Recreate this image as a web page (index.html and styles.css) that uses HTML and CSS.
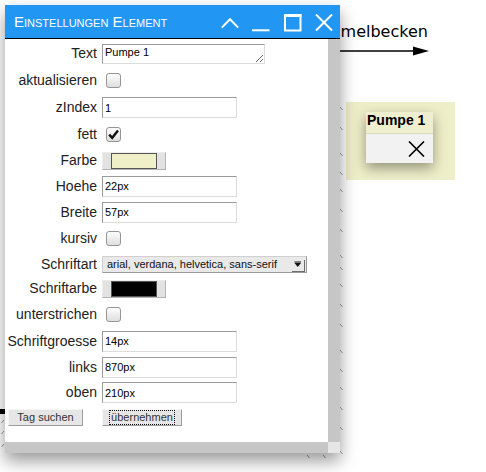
FILE: index.html
```html
<!DOCTYPE html>
<html lang="de">
<head>
<meta charset="utf-8">
<title>Einstellungen Element</title>
<link rel="stylesheet" href="styles.css">
</head>
<body>
<div class="canvas">
  <svg class="marks" width="486" height="472" viewBox="0 0 486 472">
    <g stroke="#9a9a9a" stroke-width="1">
      <line x1="340" y1="107" x2="342.5" y2="110"/>
      <line x1="340" y1="127" x2="342.5" y2="130"/>
      <line x1="340" y1="153" x2="342.5" y2="156"/>
      <line x1="340" y1="172" x2="342.5" y2="175"/>
      <line x1="340" y1="189" x2="342.5" y2="192"/>
      <line x1="340" y1="209" x2="342.5" y2="212"/>
      <line x1="340" y1="229" x2="342.5" y2="232"/>
      <line x1="340" y1="255" x2="342.5" y2="258"/>
      <line x1="340" y1="267" x2="342.5" y2="270"/>
      <line x1="340" y1="284" x2="342.5" y2="287"/>
      <line x1="340" y1="304" x2="342.5" y2="307"/>
      <line x1="340" y1="324" x2="342.5" y2="327"/>
      <line x1="340" y1="350" x2="342.5" y2="353"/>
      <line x1="340" y1="369" x2="342.5" y2="372"/>
      <line x1="340" y1="387" x2="342.5" y2="390"/>
      <line x1="340" y1="407" x2="342.5" y2="410"/>
      <line x1="340" y1="427" x2="342.5" y2="430"/>
      <line x1="340" y1="451" x2="342.5" y2="454"/>
      <line x1="307" y1="455" x2="309.5" y2="458"/>
      <line x1="323" y1="455" x2="325.5" y2="458"/>
      <line x1="4" y1="420" x2="1.5" y2="423"/>
      <line x1="4" y1="431" x2="1.5" y2="434"/>
      <line x1="4" y1="444" x2="1.5" y2="447"/>
    </g>
    <rect x="0" y="409" width="5" height="5" fill="#000"/>
  </svg>

  <div class="diagram-label">Sammelbecken</div>
  <svg class="arrow" width="130" height="14" viewBox="0 0 130 14">
    <line x1="0" y1="7" x2="116" y2="7" stroke="#000" stroke-width="1.6"/>
    <polygon points="108,2.5 124,7 108,11.5" fill="#000"/>
  </svg>

  <div class="node">
    <div class="popup">
      <div class="popup-head">Pumpe 1</div>
      <div class="popup-body">
        <svg class="popup-close" width="17" height="16" viewBox="0 0 17 16">
          <path d="M1 0.5 L16 15.5 M16 0.5 L1 15.5" stroke="#000" stroke-width="1.6" fill="none"/>
        </svg>
      </div>
    </div>
  </div>

  <div class="dialog">
    <div class="titlebar">
      <span class="title">Einstellungen Element</span>
      <svg class="ticon" width="18" height="18" viewBox="0 0 18 18">
        <polyline points="0.8,13.6 9,5.2 17.2,13.6" fill="none" stroke="#fff" stroke-width="2"/>
      </svg>
      <svg class="ticon" width="18" height="18" viewBox="0 0 18 18">
        <line x1="0" y1="16.3" x2="17.5" y2="16.3" stroke="#fff" stroke-width="2"/>
      </svg>
      <svg class="ticon sq" width="18" height="18" viewBox="0 0 18 18">
        <rect x="1" y="1" width="15.5" height="15.5" fill="none" stroke="#fff" stroke-width="2"/>
        <rect x="0" y="0" width="17.5" height="3" fill="#fff"/>
      </svg>
      <svg class="ticon" width="18" height="18" viewBox="0 0 18 18">
        <path d="M1 0.5 L17 16.5 M17 0.5 L1 16.5" stroke="#fff" stroke-width="2" fill="none"/>
      </svg>
    </div>
    <div class="main">
      <div class="content">
        <div class="row h27">
          <label class="lbl">Text</label>
          <textarea class="ta">Pumpe 1</textarea>
        </div>
        <div class="row h27">
          <label class="lbl">aktualisieren</label>
          <span class="cb"></span>
        </div>
        <div class="row h27">
          <label class="lbl">zIndex</label>
          <input class="tf" type="text" value="1">
        </div>
        <div class="row h27">
          <label class="lbl">fett</label>
          <span class="cb">
            <svg width="13" height="13" viewBox="0 0 13 13"><path d="M2.2 6.6 L5.2 9.8 L11 2.6" fill="none" stroke="#111" stroke-width="2.4"/></svg>
          </span>
        </div>
        <div class="row h25">
          <label class="lbl">Farbe</label>
          <span class="color"><span class="swatch light"></span></span>
        </div>
        <div class="row h26">
          <label class="lbl">Hoehe</label>
          <input class="tf" type="text" value="22px">
        </div>
        <div class="row h26">
          <label class="lbl">Breite</label>
          <input class="tf" type="text" value="57px">
        </div>
        <div class="row h27">
          <label class="lbl">kursiv</label>
          <span class="cb"></span>
        </div>
        <div class="row h24">
          <label class="lbl">Schriftart</label>
          <span class="sel">arial, verdana, helvetica, sans-serif
            <svg class="sel-arrow" width="14" height="17" viewBox="0 0 14 17">
              <polygon points="2.5,7 9,7 5.75,11" fill="#111"/>
              <rect x="2.5" y="5.5" width="6.5" height="1" fill="#111"/>
              <line x1="12.5" y1="4" x2="12.5" y2="16" stroke="#6e6e6e" stroke-width="1"/>
              <line x1="0" y1="15.5" x2="13" y2="15.5" stroke="#6e6e6e" stroke-width="1"/>
            </svg>
          </span>
        </div>
        <div class="row h25">
          <label class="lbl">Schriftarbe</label>
          <span class="color"><span class="swatch dark"></span></span>
        </div>
        <div class="row h27">
          <label class="lbl">unterstrichen</label>
          <span class="cb"></span>
        </div>
        <div class="row h26">
          <label class="lbl">Schriftgroesse</label>
          <input class="tf" type="text" value="14px">
        </div>
        <div class="row h26">
          <label class="lbl">links</label>
          <input class="tf" type="text" value="870px">
        </div>
        <div class="row h25">
          <label class="lbl">oben</label>
          <input class="tf" type="text" value="210px">
        </div>
        <div class="row h24 buttons">
          <button class="btn btn-search" type="button">Tag suchen</button>
          <button class="btn btn-apply" type="button"><span class="focus">übernehmen</span></button>
        </div>
      </div>
      <div class="vscroll"></div>
    </div>
    <div class="hscroll">
      <div class="hbar"></div>
      <div class="corner"></div>
    </div>
  </div>
</div>
</body>
</html>
```

FILE: styles.css
```css
html, body {
  margin: 0;
  padding: 0;
  background: #fff;
}

body {
  font-family: "Liberation Sans", Arial, sans-serif;
  color: #222;
  overflow: hidden;
}

.canvas {
  position: relative;
  width: 486px;
  height: 472px;
  overflow: hidden;
}

.marks {
  position: absolute;
  left: 0;
  top: 0;
}

.diagram-label {
  position: absolute;
  left: 305px;
  top: 22px;
  font-family: "DejaVu Sans", sans-serif;
  font-size: 16px;
  line-height: 20px;
  color: #000;
  white-space: nowrap;
}

.arrow {
  position: absolute;
  left: 305px;
  top: 44px;
}

.node {
  position: absolute;
  left: 346px;
  top: 102px;
  width: 109px;
  height: 78px;
  background: #eeeec8;
}

.popup {
  position: absolute;
  left: 20px;
  top: 10px;
  width: 67px;
  box-shadow: 0 5px 12px rgba(0, 0, 0, 0.38);
}

.popup-head {
  height: 22px;
  box-sizing: border-box;
  padding: 0 0 0 1px;
  background: #efefcf;
  border-bottom: 1px solid #dadac0;
  font-weight: bold;
  font-size: 14px;
  line-height: 17px;
  color: #000;
  white-space: nowrap;
}

.popup-body {
  height: 29px;
  background: #f2f2f2;
  display: flex;
  justify-content: flex-end;
  align-items: flex-start;
}

.popup-close {
  margin: 7px 8px 0 0;
}

.dialog {
  position: absolute;
  left: 5px;
  top: 5px;
  width: 335px;
  height: 448px;
  display: flex;
  flex-direction: column;
  background: #fff;
  box-shadow: 0 8px 16px rgba(0, 0, 0, 0.4);
}

.titlebar {
  height: 33px;
  flex: none;
  background: #2196f3;
  border-bottom: 1px solid #000;
  display: flex;
  align-items: flex-start;
  padding: 0 7px 0 9px;
  color: #fff;
}

.title {
  flex: 1;
  font-size: 15px;
  font-variant: small-caps;
  line-height: 18px;
  margin-top: 8px;
  white-space: nowrap;
}

.ticon {
  flex: none;
  margin-top: 9px;
  margin-left: 13px;
}

.ticon.sq {
  margin-left: 14px;
}

.main {
  flex: 1;
  display: flex;
  min-height: 0;
}

.content {
  flex: 1;
  padding-top: 1px;
  display: flex;
  flex-direction: column;
}

.vscroll {
  width: 12px;
  flex: none;
  background: #c6c6c6;
}

.hscroll {
  height: 11px;
  flex: none;
  display: flex;
}

.hbar {
  flex: 1;
  background: #c6c6c6;
}

.corner {
  width: 12px;
  background: #e6e6e6;
}

.row {
  display: flex;
  align-items: center;
  flex: none;
}

.h24 { height: 24px; }
.h25 { height: 25px; }
.h26 { height: 26px; }
.h27 { height: 27px; }

.lbl {
  width: 92px;
  margin-right: 5px;
  text-align: right;
  font-size: 14px;
  line-height: 17px;
  white-space: nowrap;
  color: #222;
}

.tf {
  width: 135px;
  height: 21px;
  box-sizing: border-box;
  margin: 0;
  border: 1px solid;
  border-color: #9a9a9a #dcdcdc #dcdcdc #9a9a9a;
  padding: 0 2px;
  font-family: "Liberation Sans", Arial, sans-serif;
  font-size: 11px;
  color: #000;
  background: #fff;
  outline: none;
}

.ta {
  width: 163px;
  height: 20px;
  box-sizing: border-box;
  margin: 0;
  border: 1px solid;
  border-color: #9a9a9a #dcdcdc #dcdcdc #9a9a9a;
  padding: 1px 2px;
  font-family: "Liberation Sans", Arial, sans-serif;
  font-size: 11px;
  line-height: 13px;
  color: #000;
  background: #fff;
  outline: none;
  overflow: hidden;
}

.cb {
  width: 15px;
  height: 15px;
  box-sizing: border-box;
  margin-left: 4px;
  border: 1px solid #959595;
  border-radius: 3px;
  background: linear-gradient(#fdfdfd, #dedede);
  display: flex;
  align-items: center;
  justify-content: center;
}

.color {
  width: 64px;
  height: 18px;
  box-sizing: border-box;
  padding: 0 8px;
  border: 1px solid;
  border-color: #ececec #b4b4b4 #b4b4b4 #ececec;
  background: #e2e2e2;
  display: flex;
  align-items: center;
}

.swatch {
  flex: 1;
  height: 16px;
  box-sizing: border-box;
  border: 1px solid #555;
}

.swatch.light { background: #f0f0c8; }
.swatch.dark { background: #000; }

.sel {
  position: relative;
  width: 205px;
  height: 17px;
  box-sizing: border-box;
  padding-left: 4px;
  border: 1px solid;
  border-color: #d0d0d0 #9a9a9a #9a9a9a #d0d0d0;
  background: #e9e9e9;
  font-size: 11px;
  line-height: 15px;
  color: #111;
  white-space: nowrap;
  display: flex;
  align-items: center;
}

.sel-arrow {
  position: absolute;
  right: 0;
  top: -1px;
}

.buttons {
  align-items: center;
}

.btn {
  height: 17px;
  box-sizing: border-box;
  margin: 0;
  padding: 0;
  border: 1px solid;
  border-color: #f6f6f6 #9c9c9c #9c9c9c #f6f6f6;
  background: #e6e6e6;
  font-family: "Liberation Sans", Arial, sans-serif;
  font-size: 11px;
  line-height: 13px;
  color: #333;
  display: flex;
  align-items: center;
  justify-content: center;
}

.btn-search {
  width: 75px;
  margin-left: 3px;
}

.btn-apply {
  width: 80px;
  margin-left: 19px;
}

.focus {
  border: 1px dotted #111;
  padding: 0 1px;
  line-height: 13px;
}
```
